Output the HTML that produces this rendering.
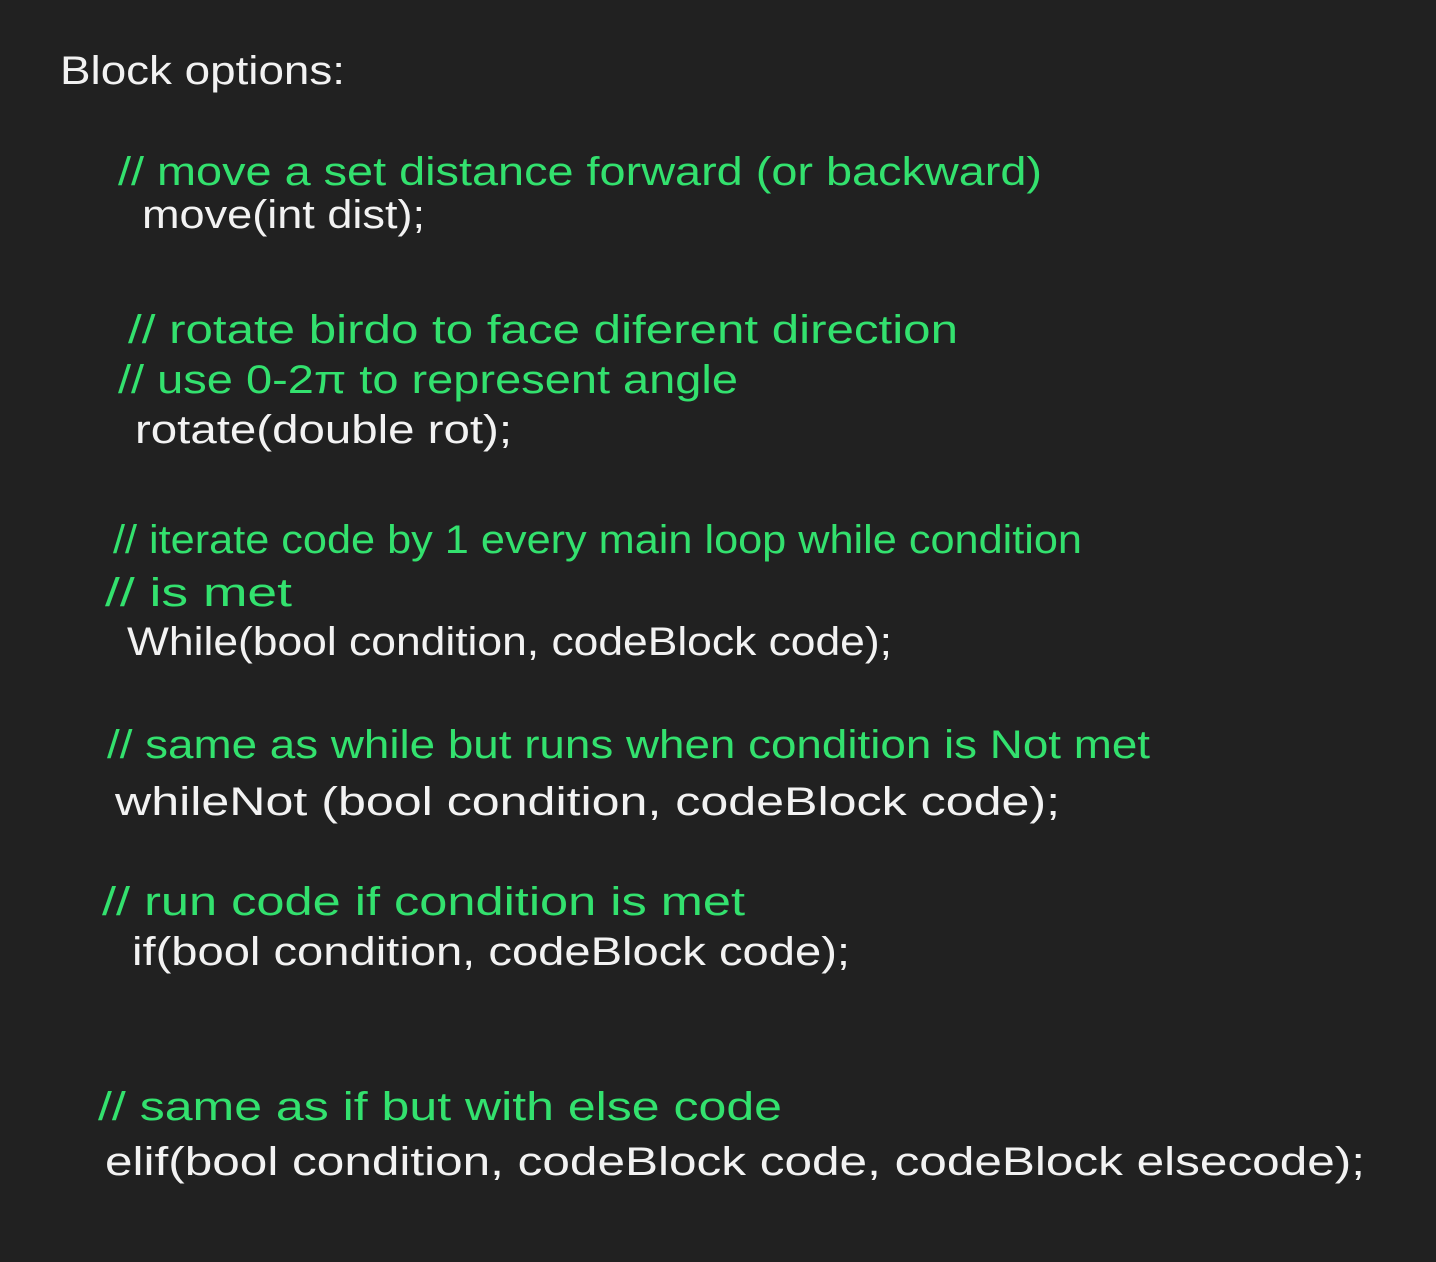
<!DOCTYPE html>
<html><head><meta charset="utf-8"><style>
html,body{margin:0;padding:0;background:#212121;width:1436px;height:1262px;overflow:hidden}
svg{display:block}
text{font-family:"Liberation Sans",sans-serif;font-size:40px;}
.w{fill:#f2f2f2}.g{fill:#33e16e}
</style></head><body>
<svg width="1436" height="1262" viewBox="0 0 1436 1262" xmlns="http://www.w3.org/2000/svg">
<rect width="1436" height="1262" fill="#212121"/>
<text class="w" x="60" y="84" textLength="285" lengthAdjust="spacingAndGlyphs">Block options:</text>
<text class="g" x="118" y="185" textLength="924" lengthAdjust="spacingAndGlyphs">// move a set distance forward (or backward)</text>
<text class="w" x="142" y="228" textLength="283" lengthAdjust="spacingAndGlyphs">move(int dist);</text>
<text class="g" x="128" y="343" textLength="830" lengthAdjust="spacingAndGlyphs">// rotate birdo to face diferent direction</text>
<text class="g" x="118" y="393" textLength="620" lengthAdjust="spacingAndGlyphs">// use 0-2π to represent angle</text>
<text class="w" x="135" y="443" textLength="377" lengthAdjust="spacingAndGlyphs">rotate(double rot);</text>
<text class="g" x="113" y="553" textLength="969" lengthAdjust="spacingAndGlyphs">// iterate code by 1 every main loop while condition</text>
<text class="g" x="105" y="606" textLength="187" lengthAdjust="spacingAndGlyphs">// is met</text>
<text class="w" x="127" y="655" textLength="765" lengthAdjust="spacingAndGlyphs">While(bool condition, codeBlock code);</text>
<text class="g" x="107" y="758" textLength="1043" lengthAdjust="spacingAndGlyphs">// same as while but runs when condition is Not met</text>
<text class="w" x="115" y="815" textLength="945" lengthAdjust="spacingAndGlyphs">whileNot (bool condition, codeBlock code);</text>
<text class="g" x="102" y="915" textLength="643" lengthAdjust="spacingAndGlyphs">// run code if condition is met</text>
<text class="w" x="132" y="965" textLength="718" lengthAdjust="spacingAndGlyphs">if(bool condition, codeBlock code);</text>
<text class="g" x="98" y="1120" textLength="684" lengthAdjust="spacingAndGlyphs">// same as if but with else code</text>
<text class="w" x="105" y="1175" textLength="1260" lengthAdjust="spacingAndGlyphs">elif(bool condition, codeBlock code, codeBlock elsecode);</text>
</svg>
</body></html>
